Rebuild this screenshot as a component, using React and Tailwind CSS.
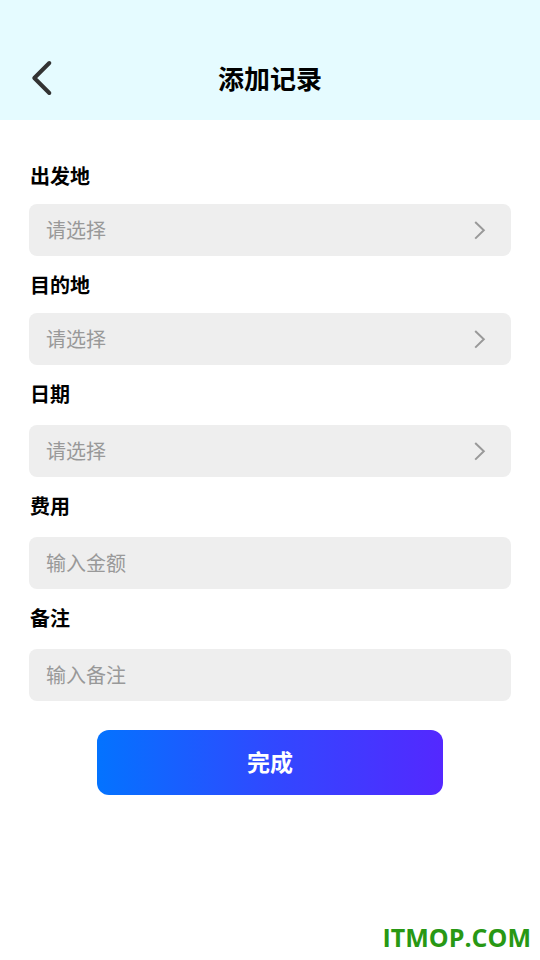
import React from 'react';

function Chevron() {
  return (
    <svg className="h-5 w-3 shrink-0" viewBox="0 0 12 20" fill="none" stroke="#999999" strokeWidth="2" aria-hidden="true">
      <path d="M1.2 2 L9.8 10.3 L1.2 18.6" />
    </svg>
  );
}

const labelClass = 'block pl-px text-xl leading-7 font-bold text-black';
const boxClass = 'block h-13 w-full rounded-lg bg-[#eeeeee] px-[17px] text-xl text-[#999999]';

function Field({ id, label, spacing, children }) {
  return (
    <div className={'flex flex-col ' + spacing}>
      <label htmlFor={id} className={labelClass}>{label}</label>
      {children}
    </div>
  );
}

function Picker({ id }) {
  return (
    <button id={id} type="button" className={boxClass}>
      <span className="flex items-center justify-between pr-2">
        请选择
        <Chevron />
      </span>
    </button>
  );
}

function TextField({ id, placeholder }) {
  return (
    <input id={id} type="text" placeholder={placeholder} className={boxClass + ' pb-[2px] placeholder:text-[#999999] placeholder:opacity-100'} />
  );
}

export default function App() {
  return (
    <div className="flex min-h-screen flex-col bg-white font-['Noto_Sans_CJK_SC',sans-serif]">
      <header className="grid h-30 grid-cols-[1fr_auto_1fr] items-center bg-[#e5fbff] px-[29px] pt-9">
        <button type="button" aria-label="返回" className="justify-self-start">
          <svg className="block h-9 w-6" viewBox="0 0 24 36" fill="none" stroke="#333333" strokeWidth="4" strokeLinecap="round" strokeLinejoin="round">
            <path d="M20.3 3 L5.3 18 L20.3 33" />
          </svg>
        </button>
        <h1 className="text-[26px] leading-9 font-bold text-black">添加记录</h1>
      </header>
      <main className="px-[29px] pt-[42px]">
        <form className="flex flex-col gap-[15px]">
          <Field id="from" label="出发地" spacing="gap-[14px]"><Picker id="from" /></Field>
          <Field id="to" label="目的地" spacing="gap-[14px]"><Picker id="to" /></Field>
          <Field id="date" label="日期" spacing="gap-[17px]"><Picker id="date" /></Field>
          <Field id="cost" label="费用" spacing="gap-[17px]"><TextField id="cost" placeholder="输入金额" /></Field>
          <Field id="note" label="备注" spacing="gap-[17px]"><TextField id="note" placeholder="输入备注" /></Field>
          <button type="submit" className="mx-17 mt-[14px] h-[65px] rounded-xl bg-linear-to-r/srgb from-[#0373ff] via-[#3049ff] to-[#5428ff] pb-[2px] text-[23px] font-bold text-white">完成</button>
        </form>
      </main>
      <footer className="mt-auto flex justify-end pr-[9px] pb-[5px] font-['Open_Sans',sans-serif] text-[25px] leading-9 font-bold text-[#289814]">ITMOP.COM</footer>
    </div>
  );
}
